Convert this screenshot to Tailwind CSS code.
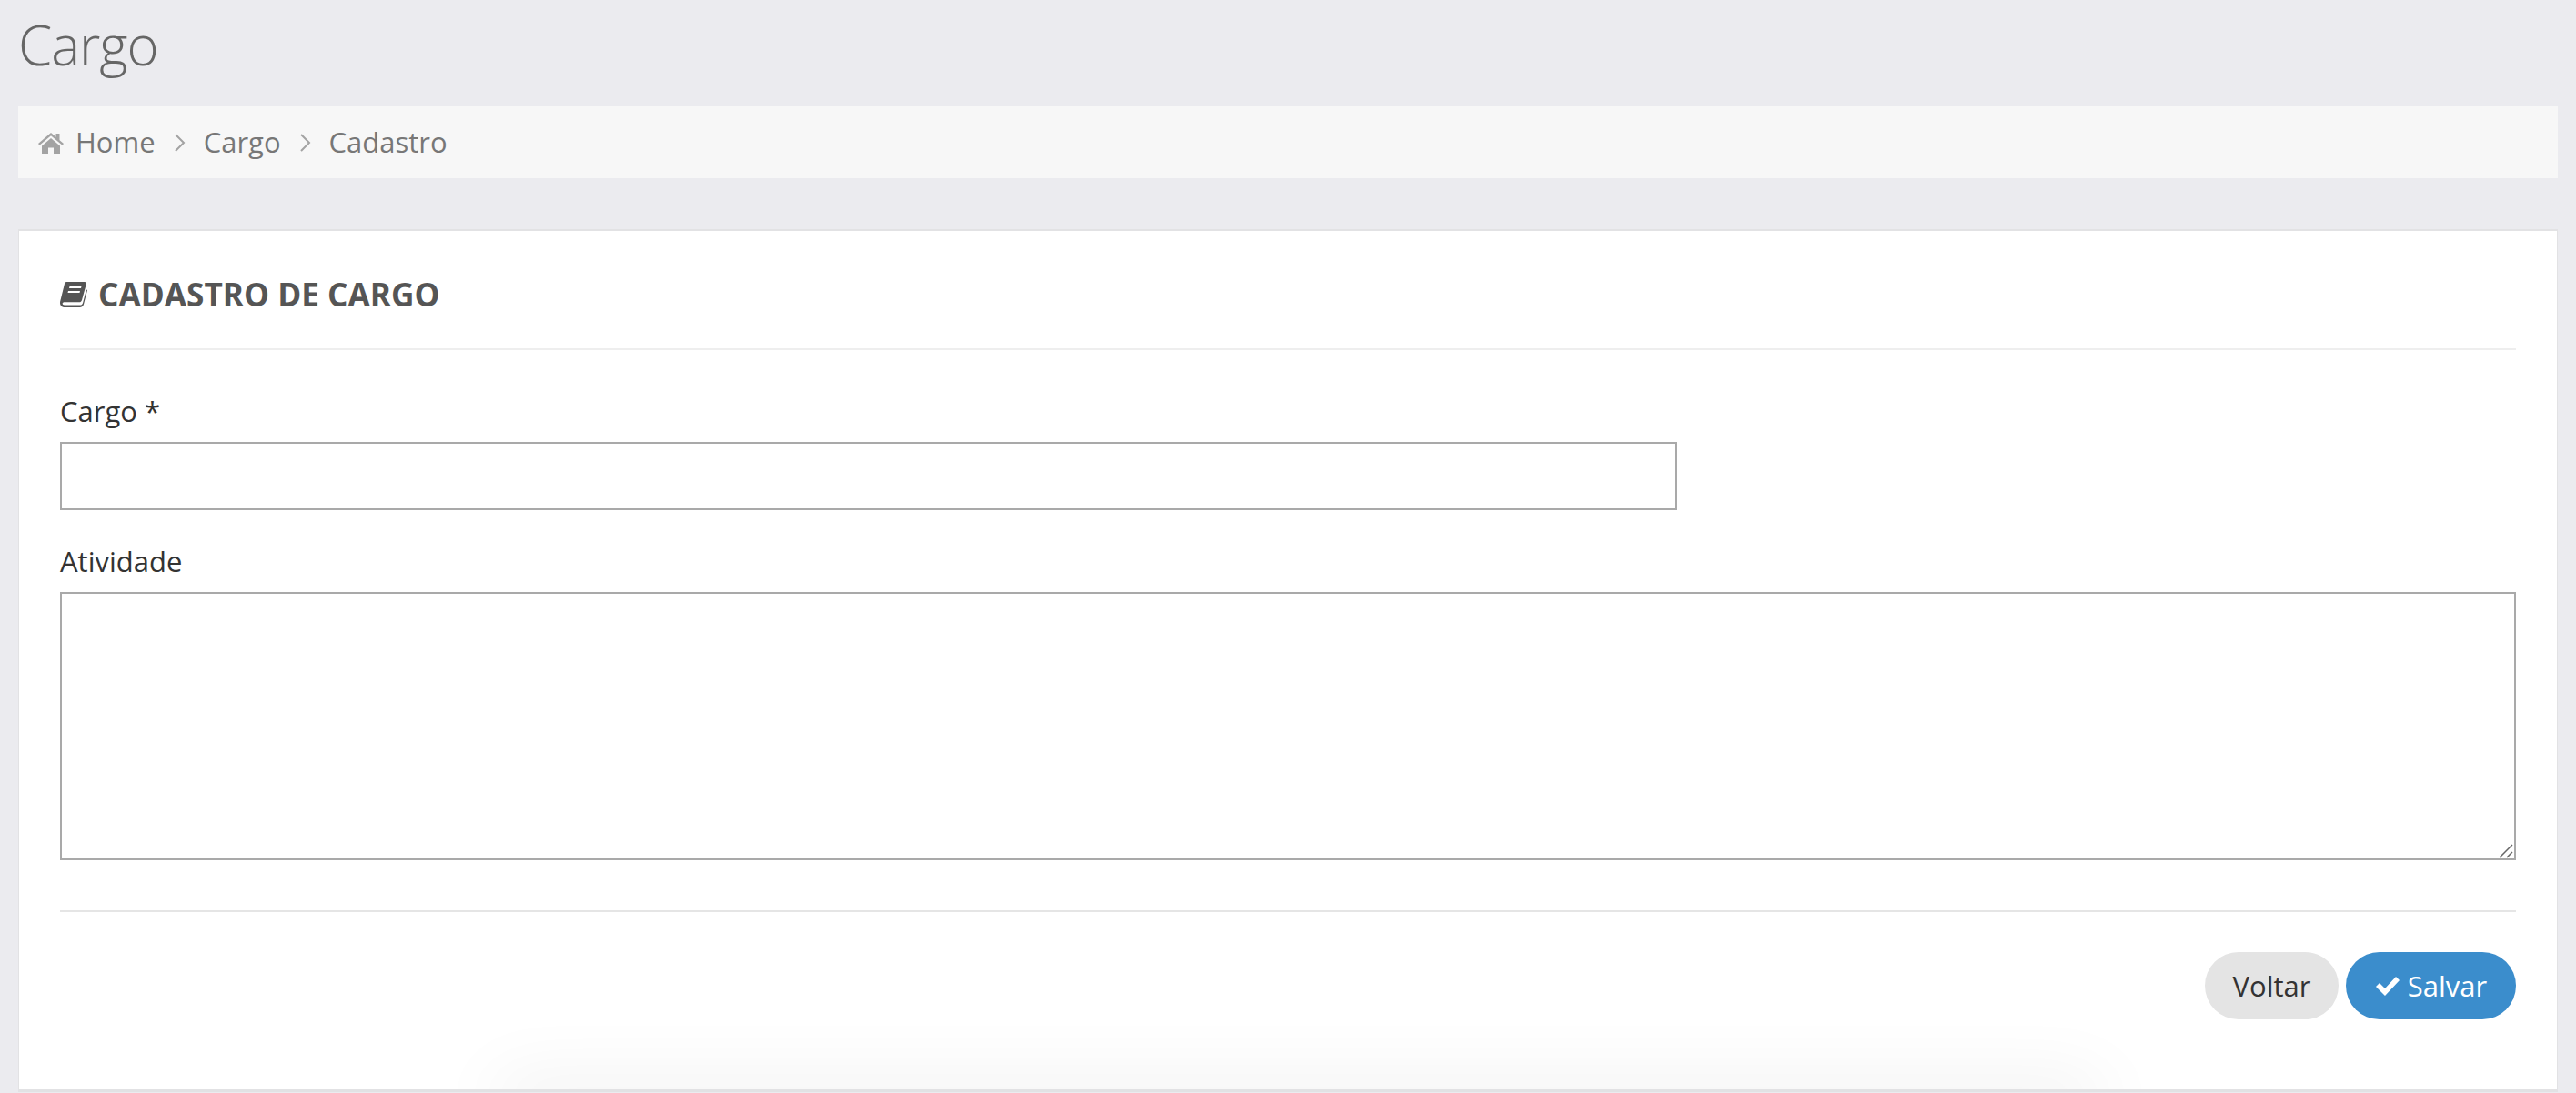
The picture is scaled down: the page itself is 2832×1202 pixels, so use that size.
<!DOCTYPE html>
<html lang="pt">
<head>
<meta charset="UTF-8">
<title>Cargo</title>
<script src="https://cdn.jsdelivr.net/npm/@tailwindcss/browser@4"></script>
</head>
<body class="bg-[#ebebef] font-['Open_Sans',sans-serif] text-[#555] h-[1202px] overflow-hidden">
<div class="px-5">
  <h1 class="h-[117px] pt-[15px] text-[60px] leading-[68px] font-light text-[#666] tracking-[-1px]">Cargo</h1>
  <div class="h-[79px] bg-[#f7f7f7] flex items-center px-[22px] text-[31px] text-[#777]">
    <svg class="w-[28px] h-[24px] mr-[13px]" viewBox="0 0 28 24"><path fill="#a3a3a3" d="M14 1 0 13l1.500 1.800L14 4.200l12.500 10.600L28 13l-4.500-3.800V2h-4v3.800zM4 15.500V24h7v-6.500h6V24h7v-8.500L14 7z"/></svg>
    <span>Home</span>
    <svg class="w-[14px] h-[22px] ml-[20px] mr-[19px]" viewBox="0 0 14 22"><path fill="none" stroke="#a3a3a3" stroke-width="2" d="m2 2 9 9-9 9"/></svg>
    <span>Cargo</span>
    <svg class="w-[14px] h-[22px] ml-[20px] mr-[19px]" viewBox="0 0 14 22"><path fill="none" stroke="#a3a3a3" stroke-width="2" d="m2 2 9 9-9 9"/></svg>
    <span>Cadastro</span>
  </div>
  <div class="relative overflow-hidden mt-[56px] bg-white border-t-2 border-x border-b-[3px] border-[#e2e2e4] h-[949px] px-[45px]">
    <div class="h-[131px] border-b-2 border-[#eeeeee] flex items-center pt-[10px]">
      <svg class="w-[30px] h-[30px] mr-[12px]" viewBox="0 0 30 30"><path fill="#555" d="M7 1h20c1.500 0 2.200 1 1.800 2.500L24 21c-.5 1.600-1.300 2.300-3 2.300H5c-1.400 0-2.300.5-2.300 1.500s1 1.700 2.300 1.700h17c1.500 0 2.500-.8 3-2.300l4-15 1 1-4 15.300c-.5 2-2.200 3.500-4.300 3.500H5c-3 0-5-2.200-5-5 0-.8.1-1.500.4-2.500L5 3c.3-1.200 1-2 2-2zm3.500 5-.5 2h13l.5-2zm-1.500 5-.5 2h13l.5-2z"/></svg>
      <h2 class="text-[35.2px] font-bold text-[#555]">CADASTRO DE CARGO</h2>
    </div>
    <label class="block mt-[47px] text-[31px] leading-[40px] text-[#333]">Cargo *</label>
    <input class="block mt-[14px] w-[1778px] h-[75px] border-2 border-[#a9a9a9] bg-white">
    <label class="block mt-[36px] text-[31px] leading-[40px] text-[#333]">Atividade</label>
    <div class="relative mt-[14px]">
      <textarea class="block w-full h-[295px] border-2 border-[#a9a9a9] bg-white resize-none"></textarea>
      <!-- alca de redimensionar -->
      <svg class="absolute right-[3px] bottom-[2px] w-[16px] h-[16px]" viewBox="0 0 16 16"><path fill="none" stroke="#666" stroke-width="1.500" d="M1 15 15 1M9 15l6-6"/></svg>
    </div>
    <div class="mt-[55px] border-t-2 border-[#e5e5e5] pt-[44px] flex justify-end gap-[8px]">
      <button class="h-[74px] w-[147px] rounded-full bg-[#e4e4e4] text-[31px] text-[#333]">Voltar</button>
      <button class="h-[74px] w-[187px] rounded-full bg-[#3b8dcc] text-[31px] text-white flex items-center justify-center gap-[8px]">
        <svg class="w-[28px] h-[24px]" viewBox="0 0 28 24"><path fill="#fff" d="M11 23 1 13l4-4 6 6L23 2l4 4z"/></svg>
        <span>Salvar</span>
      </button>
    </div>
    <div class="absolute left-[525px] w-[1765px] bottom-[-20px] h-[20px] shadow-[0_0_80px_rgba(0,0,0,0.14)]"></div>
  </div>
</div>
</body>
</html>
